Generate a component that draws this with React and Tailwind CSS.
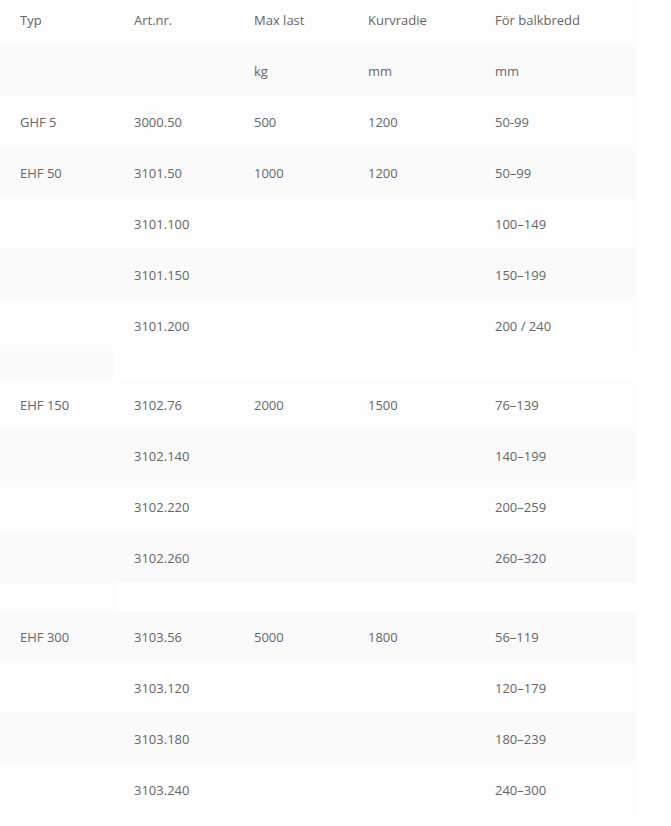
import React from "react";

const groups = [
  [
    ["GHF 5", "3000.50", "500", "1200", "50-99"],
    ["EHF 50", "3101.50", "1000", "1200", "50–99"],
    ["", "3101.100", "", "", "100–149"],
    ["", "3101.150", "", "", "150–199"],
    ["", "3101.200", "", "", "200 / 240"],
  ],
  [
    ["EHF 150", "3102.76", "2000", "1500", "76–139"],
    ["", "3102.140", "", "", "140–199"],
    ["", "3102.220", "", "", "200–259"],
    ["", "3102.260", "", "", "260–320"],
  ],
  [
    ["EHF 300", "3103.56", "5000", "1800", "56–119"],
    ["", "3103.120", "", "", "120–179"],
    ["", "3103.180", "", "", "180–239"],
    ["", "3103.240", "", "", "240–300"],
  ],
];

const buildRows = () => {
  const rows = [{ type: "units", cells: ["", "", "kg", "mm", "mm"] }];
  groups.forEach((group, i) => {
    if (i > 0) rows.push({ type: "spacer" });
    group.forEach((cells) => rows.push({ type: "data", cells }));
  });
  return rows;
};

const App = () => {
  const rows = buildRows();

  return (
    <div
      className="w-[671px] min-h-[826px] bg-white text-[#666] text-[13px]"
      style={{ fontFamily: '"Source Sans Pro", "Open Sans", "Noto Sans", sans-serif' }}
    >
      <table className="w-[636px] table-fixed border-collapse">
        <colgroup>
          <col className="w-[114px]" />
          <col className="w-[120px]" />
          <col className="w-[114px]" />
          <col className="w-[127px]" />
          <col className="w-[161px]" />
        </colgroup>
        <thead>
          <tr className="bg-[#fdfdfd]">
            {["Typ", "Art.nr.", "Max last", "Kurvradie", "För balkbredd"].map((h) => (
              <th key={h} className="h-[45px] pb-[4px] pl-[20px] text-left font-normal align-middle">
                {h}
              </th>
            ))}
          </tr>
        </thead>
        <tbody>
          {rows.map((row, i) => {
            const bg = i % 2 === 0 ? "bg-[#fafafa]" : "bg-[#fdfdfd]";
            if (row.type === "spacer") {
              return (
                <tr key={i}>
                  <td className={`h-[28px] p-0 ${bg}`} />
                </tr>
              );
            }
            return (
              <tr key={i} className={bg}>
                {row.cells.map((c, j) => (
                  <td key={j} className="h-[51px] pt-[2px] pl-[20px] align-middle">
                    {c}
                  </td>
                ))}
              </tr>
            );
          })}
        </tbody>
      </table>
    </div>
  );
};

export default App;
